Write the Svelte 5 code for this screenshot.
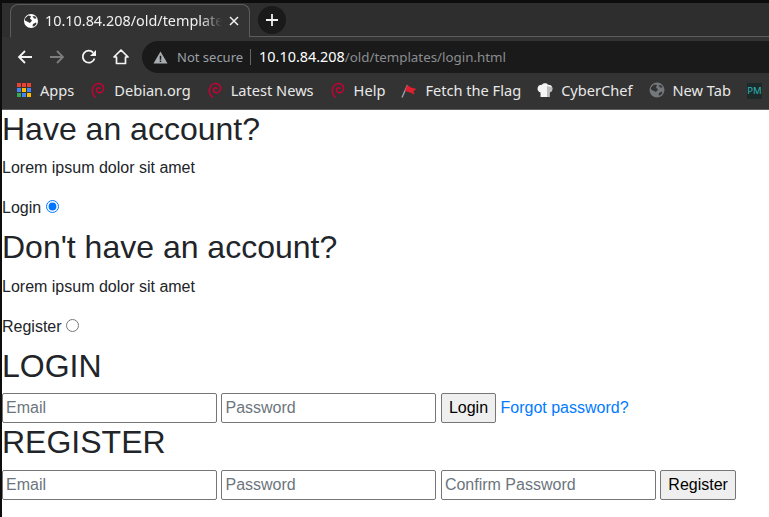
<script>
  const bookmarks = [
    { label: 'Debian.org', icon: 'debian' },
    { label: 'Latest News', icon: 'debian' },
    { label: 'Help', icon: 'debian' },
    { label: 'Fetch the Flag', icon: 'flag' },
    { label: 'CyberChef', icon: 'chef' },
    { label: 'New Tab', icon: 'globe' }
  ];
  const appColors = ['#ea4335','#ea4335','#ea4335','#4285f4','#fbbc04','#4285f4','#34a853','#4285f4','#fbbc04'];
</script>

<div class="page">
  <div class="browser">
    <div class="tabstrip">
      <div class="tab">
        <svg class="tabglobe" viewBox="0 0 16 16" width="16" height="16"><circle cx="8" cy="8" r="7" fill="#fff"/><path d="M2 5.500l3-3 3 .5-1 2.500 2 2-2 2.500-2-1-3-1.500zM10 11l3-1.500.5 1.500-2.500 2.500-1.500-.5zM9.500 3l3 .5 1 2-2.500 0z" fill="#333"/></svg>
        <span class="tabtitle">10.10.84.208/old/templates/login.html</span>
        <svg class="close" viewBox="0 0 10 10" width="10" height="10"><path d="M1 1l8 8M9 1l-8 8" stroke="#f1f1f1" stroke-width="1.500"/></svg>
      </div>
      <div class="newtab"><svg viewBox="0 0 12 12" width="12" height="12"><path d="M6 0v12M0 6h12" stroke="#f1f1f1" stroke-width="1.800"/></svg></div>
      <div class="stripfill"></div>
    </div>
    <div class="toolbar">
      <svg class="nav" viewBox="0 0 16 16" width="16" height="16"><path d="M15 8H2M8 2L2 8l6 6" fill="none" stroke="#f4f4f4" stroke-width="1.800"/></svg>
      <svg class="nav" viewBox="0 0 16 16" width="16" height="16"><path d="M1 8h13M8 2l6 6-6 6" fill="none" stroke="#7d7d7d" stroke-width="1.800"/></svg>
      <svg class="nav" viewBox="0 0 16 16" width="16" height="16"><path d="M13.500 9.500A6 6 0 1 1 12.200 3.600" fill="none" stroke="#f4f4f4" stroke-width="1.800"/><path d="M15 1v6H9z" fill="#f4f4f4"/></svg>
      <svg class="nav" viewBox="0 0 16 16" width="16" height="16"><path d="M8 1L1 8h2.500v6.500h9V8H15z" fill="none" stroke="#f4f4f4" stroke-width="1.700" stroke-linejoin="round"/></svg>
      <div class="omnibox">
        <svg viewBox="0 0 16 16" width="15" height="15"><path d="M8 1.500L15.500 14.500H.5z" fill="#a8abaf"/><path d="M7.200 6h1.600v4.500H7.200zM7.200 11.300h1.600v1.500H7.200z" fill="#1a1a1a"/></svg>
        <span class="insecure">Not secure</span>
        <span class="sep"></span>
        <span class="url"><span class="host">10.10.84.208</span><span class="path">/old/templates/login.html</span></span>
      </div>
    </div>
    <div class="bookmarks">
      <div class="bm">
        <div class="grid">
          {#each appColors as c}<i style="background:{c}"></i>{/each}
        </div>
        <span>Apps</span>
      </div>
      {#each bookmarks as b}
        <div class="bm">
          {#if b.icon === 'debian'}
            <svg viewBox="0 0 16 16" width="16" height="16"><path d="M6 15.500C3 13.500 1.800 10.500 2.500 7 3.200 3.500 6 1.200 9 1.500c3 .3 5 2.700 4.600 5.500-.4 2.700-3 4.300-5.300 3.500C6.500 9.800 5.900 7.800 7 6.500c1-1.100 2.800-.9 3.500.5" fill="none" stroke="#c70036" stroke-width="1.500"/></svg>
          {:else if b.icon === 'flag'}
            <svg viewBox="0 0 16 16" width="16" height="16"><path d="M1 15.500L6.500 3" stroke="#9aa5b4" stroke-width="1.300"/><path d="M6 3l4 2.500 5.500 1.500-3 2 1 3.500-4.500-2-5-1.500z" fill="#e0202f"/></svg>
          {:else if b.icon === 'chef'}
            <svg viewBox="0 0 16 16" width="16" height="16"><path d="M3.500 15V10.500C1 10 0 7.500 .8 5.200 1.600 3 3.500 2.500 5 2.700 6.500.8 9.500.8 11 2.700c1.500-.2 3.500.3 4.200 2.500.8 2.300-.2 4.800-2.700 5.300V15z" fill="#f4f4f4"/><path d="M10 4v11h2.500v-4.500c1.700-.4 2.900-2.500 2.700-5.300z" fill="#bcbcbc"/></svg>
          {:else}
            <svg viewBox="0 0 16 16" width="16" height="16"><circle cx="8" cy="8" r="7.500" fill="#74777c"/><path d="M2 5.500l3-3 3 .5-1 2.500 2 2-2 2.500-2-1-3-1.500zM10 11l3-1.500.5 1.500-2.500 2.500-1.500-.5zM9.500 3l3 .5 1 2-2.500 0z" fill="#333"/></svg>
          {/if}
          <span>{b.label}</span>
        </div>
      {/each}
      <div class="pm">PM</div>
    </div>
  </div>

  <main>
    <h2>Have an account?</h2>
    <p>Lorem ipsum dolor sit amet</p>
    <label class="choice">Login <input type="radio" name="mode" checked /></label>
    <h2>Don't have an account?</h2>
    <p>Lorem ipsum dolor sit amet</p>
    <label class="choice">Register <input type="radio" name="mode" /></label>
    <h2>LOGIN</h2>
    <form>
      <input type="text" placeholder="Email" />
      <input type="password" placeholder="Password" />
      <button type="button">Login</button>
      <a href="#forgot">Forgot password?</a>
    </form>
    <h2>REGISTER</h2>
    <form>
      <input type="text" placeholder="Email" />
      <input type="password" placeholder="Password" />
      <input type="password" placeholder="Confirm Password" />
      <button type="button">Register</button>
    </form>
  </main>
</div>

<style>
  :global(body) {
    margin: 0;
    background: #fff;
    overflow: hidden;
  }
  .page {
    width: 769px;
    height: 517px;
    box-sizing: border-box;
    border-left: 2px solid #0d0d0d;
    overflow: hidden;
    font-family: "Liberation Sans", Arial, sans-serif;
    font-size: 16px;
    line-height: 24px;
    color: #212529;
  }
  .browser {
    font-family: "Noto Sans", sans-serif;
    color: #e8e8e8;
    font-size: 14px;
  }
  .tabstrip {
    display: flex;
    height: 34px;
    border-top: 3px solid #0d0d0d;
    background: #2e2e2e;
    align-items: stretch;
  }
  .tab {
    display: flex;
    align-items: center;
    margin-left: 8px;
    margin-top: 1px;
    width: 240px;
    box-sizing: border-box;
    padding: 0 10px 0 12px;
    background: #333;
    border: 1px solid #5c5c5c;
    border-bottom: none;
    border-radius: 8px 8px 0 0;
  }
  .tabglobe { flex: none; margin-right: 6px; }
  .tabtitle {
    flex: 1;
    min-width: 0;
    overflow: hidden;
    white-space: nowrap;
    font-size: 14.4px;
    color: #f1f1f1;
    -webkit-mask-image: linear-gradient(to right, #000 88%, transparent);
    mask-image: linear-gradient(to right, #000 88%, transparent);
  }
  .close { flex: none; margin-left: 7px; }
  .newtab {
    flex: none;
    width: 28px;
    height: 28px;
    margin: 3px 0 0 8px;
    border-radius: 50%;
    background: #1a1a1a;
    display: flex;
    align-items: center;
    justify-content: center;
  }
  .stripfill {
    flex: 1;
    margin-left: -36px;
    border-bottom: 1px solid #5c5c5c;
  }
  .toolbar {
    display: flex;
    align-items: center;
    height: 39px;
    background: #333;
    padding-left: 15px;
    gap: 16px;
  }
  .nav { flex: none; }
  .omnibox {
    flex: 1;
    margin-left: -3px;
    margin-top: 1px;
    height: 32px;
    background: #1a1a1a;
    border-radius: 16px 0 0 16px;
    display: flex;
    align-items: center;
    padding-left: 11px;
    font-size: 14px;
    white-space: nowrap;
  }
  .insecure { color: #9aa0a6; margin-left: 9px; font-size: 13px; }
  .sep { width: 1px; height: 16px; background: #666; margin: 0 8px 0 7px; }
  .host { color: #fff; font-size: 14.4px; }
  .path { color: #8a8d91; font-size: 13.35px; }
  .bookmarks {
    display: flex;
    align-items: center;
    box-sizing: border-box;
    height: 34px;
    background: #333;
    border-bottom: 1px solid #5c5c5c;
    padding: 0 0 5px 15px;
    gap: 16px;
    white-space: nowrap;
    overflow: hidden;
    font-size: 14.6px;
  }
  .bm { display: flex; align-items: center; gap: 8px; flex: none; }
  .grid {
    width: 15px;
    height: 14px;
    display: grid;
    grid-template-columns: repeat(3, 4px);
    grid-auto-rows: 4px;
    gap: 1px;
  }
  .pm {
    flex: none;
    width: 15px;
    height: 16px;
    margin-top: 2px;
    background: #1d2a2a;
    color: #2fb5b5;
    font-size: 9.5px;
    line-height: 16px;
    text-align: center;
  }
  main { padding: 0; }
  h2 {
    margin: 0 0 8px;
    font-size: 32px;
    font-weight: 500;
    line-height: 38.4px;
    color: #212529;
  }
  p { margin: 0 0 16px; }
  .choice { display: inline-block; margin-bottom: 8px; }
  input[type="radio"] { margin: 0; padding: 0; }
  form { line-height: 30px; }
  form input {
    width: 215px;
    height: 30px;
    box-sizing: border-box;
    padding: 1px 3px;
    font: inherit;
    font-size: 16px;
    border: 1px solid #767676;
    border-radius: 2px;
    vertical-align: top;
    margin: 0;
  }
  form input::placeholder { color: #6c757d; opacity: 1; }
  button {
    height: 30px;
    box-sizing: border-box;
    padding: 1px 7px;
    font: inherit;
    font-size: 16px;
    line-height: normal;
    color: #000;
    background: #efefef;
    border: 1px solid #767676;
    border-radius: 2px;
    vertical-align: top;
    margin: 0;
  }
  a { color: #007bff; text-decoration: none; }
</style>
